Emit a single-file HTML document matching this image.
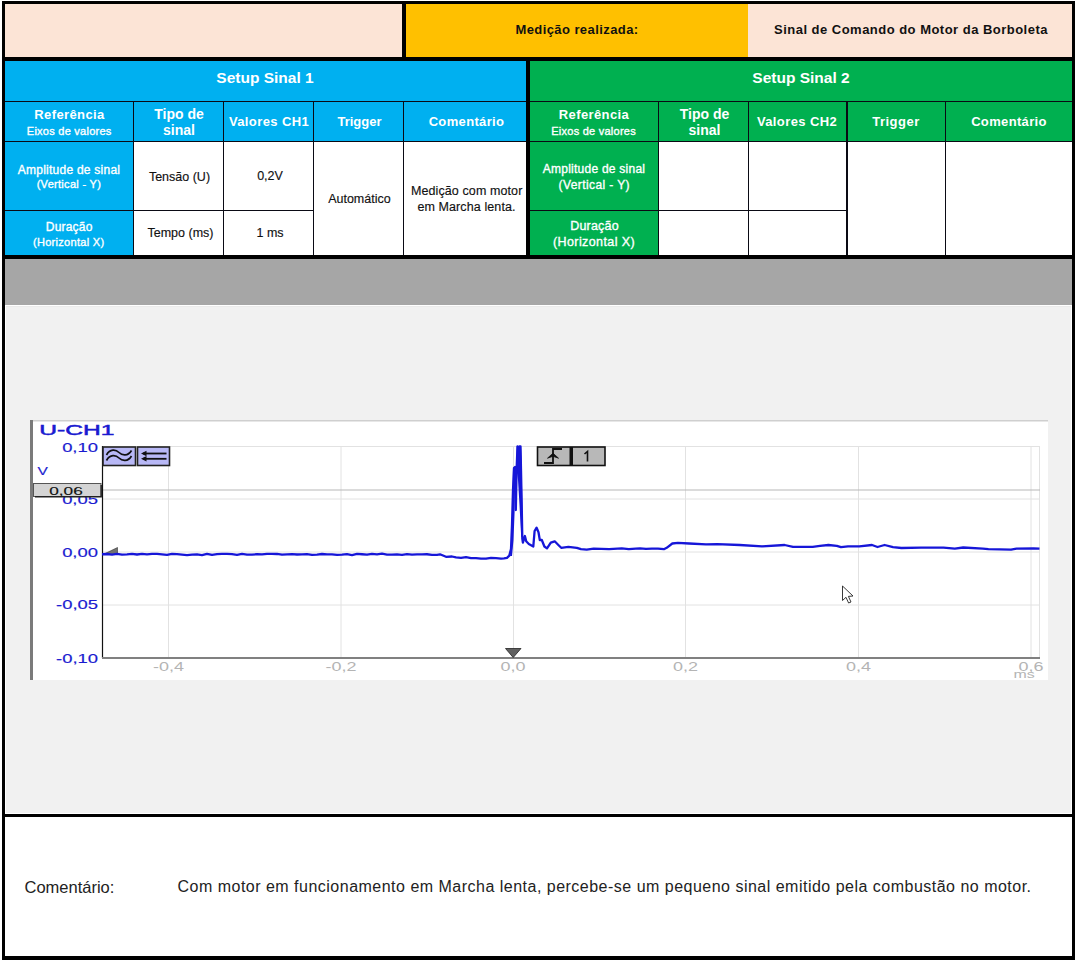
<!DOCTYPE html>
<html><head><meta charset="utf-8"><style>
html,body{margin:0;padding:0;background:#fff;}
body{width:1078px;height:962px;position:relative;overflow:hidden;font-family:"Liberation Sans",sans-serif;}
.r{position:absolute;}
.t{position:absolute;line-height:20px;height:20px;white-space:nowrap;}
</style></head><body>
<div class="r" style="left:2px;top:1px;width:1073px;height:959px;background:#000;"></div>
<div class="r" style="left:5px;top:4px;width:1067px;height:952px;background:#fff;"></div>
<div class="r" style="left:5px;top:4px;width:397px;height:53px;background:#FCE4D6;"></div>
<div class="r" style="left:406px;top:4px;width:342px;height:53px;background:#FFC000;"></div>
<div class="r" style="left:748px;top:4px;width:324px;height:53px;background:#FCE4D6;"></div>
<div class="r" style="left:5px;top:61px;width:521px;height:194px;background:#00B0F0;"></div>
<div class="r" style="left:530px;top:61px;width:542px;height:194px;background:#00B050;"></div>
<div class="r" style="left:134px;top:142px;width:392px;height:113px;background:#fff;"></div>
<div class="r" style="left:659px;top:142px;width:413px;height:113px;background:#fff;"></div>
<div class="r" style="left:5px;top:101px;width:521px;height:1px;background:#0a0a14;"></div>
<div class="r" style="left:529px;top:101px;width:543px;height:1px;background:#0a0a14;"></div>
<div class="r" style="left:5px;top:141px;width:521px;height:1px;background:#0a0a14;"></div>
<div class="r" style="left:529px;top:141px;width:543px;height:1px;background:#0a0a14;"></div>
<div class="r" style="left:5px;top:210px;width:308px;height:1px;background:#0a0a14;"></div>
<div class="r" style="left:529px;top:210px;width:317px;height:1px;background:#0a0a14;"></div>
<div class="r" style="left:133px;top:102px;width:1px;height:153px;background:#0a0a14;"></div>
<div class="r" style="left:223px;top:102px;width:1px;height:153px;background:#0a0a14;"></div>
<div class="r" style="left:313px;top:102px;width:1px;height:153px;background:#0a0a14;"></div>
<div class="r" style="left:403px;top:102px;width:1px;height:153px;background:#0a0a14;"></div>
<div class="r" style="left:658px;top:102px;width:1px;height:153px;background:#0a0a14;"></div>
<div class="r" style="left:748px;top:102px;width:1px;height:153px;background:#0a0a14;"></div>
<div class="r" style="left:945px;top:102px;width:1px;height:153px;background:#0a0a14;"></div>
<div class="r" style="left:846px;top:102px;width:2px;height:153px;background:#0a0a14;"></div>
<div class="r" style="left:5px;top:57px;width:1067px;height:4px;background:#000;"></div>
<div class="r" style="left:402px;top:4px;width:4px;height:53px;background:#000;"></div>
<div class="r" style="left:526px;top:61px;width:4px;height:198px;background:#000;"></div>
<div class="r" style="left:5px;top:255px;width:1067px;height:4px;background:#000;"></div>
<div class="r" style="left:5px;top:814px;width:1067px;height:3px;background:#000;"></div>
<div class="r" style="left:5px;top:259px;width:1067px;height:46px;background:#A6A6A6;"></div>
<div class="r" style="left:5px;top:305px;width:1067px;height:509px;background:#FFFFFF;"></div>
<div class="r" style="left:6px;top:306px;width:1065px;height:507px;background:#F1F1F1;"></div>
<div class="r" style="left:6px;top:306px;width:1065px;height:1px;background:#EAEAEA;"></div>
<div class="r" style="left:5px;top:813px;width:1067px;height:1px;background:#fff;"></div>
<div class="t" style="left:277.00px;top:19.70px;width:600px;text-align:center;font-size:13px;font-weight:bold;color:#111;letter-spacing:0.42px;">Medição realizada:</div>
<div class="t" style="left:611.00px;top:20.10px;width:600px;text-align:center;font-size:13px;font-weight:bold;color:#111;letter-spacing:0.48px;">Sinal de Comando do Motor da Borboleta</div>
<div class="t" style="left:-35.00px;top:68.43px;width:600px;text-align:center;font-size:15.5px;font-weight:bold;color:#fff;letter-spacing:0px;">Setup Sinal 1</div>
<div class="t" style="left:501.00px;top:68.43px;width:600px;text-align:center;font-size:15.5px;font-weight:bold;color:#fff;letter-spacing:0px;">Setup Sinal 2</div>
<div class="t" style="left:-230.50px;top:105.30px;width:600px;text-align:center;font-size:13px;font-weight:bold;color:#fff;letter-spacing:0.4px;">Referência</div>
<div class="t" style="left:-230.80px;top:121.19px;width:600px;text-align:center;font-size:11px;font-weight:normal;color:#fff;letter-spacing:0.25px;-webkit-text-stroke:0.35px #fff;">Eixos de valores</div>
<div class="t" style="left:-121.00px;top:103.55px;width:600px;text-align:center;font-size:14px;font-weight:bold;color:#fff;letter-spacing:0px;">Tipo de</div>
<div class="t" style="left:-121.00px;top:119.55px;width:600px;text-align:center;font-size:14px;font-weight:bold;color:#fff;letter-spacing:0px;">sinal</div>
<div class="t" style="left:-31.00px;top:112.30px;width:600px;text-align:center;font-size:13px;font-weight:bold;color:#fff;letter-spacing:0.39px;">Valores CH1</div>
<div class="t" style="left:59.50px;top:112.30px;width:600px;text-align:center;font-size:13px;font-weight:bold;color:#fff;letter-spacing:0px;">Trigger</div>
<div class="t" style="left:166.50px;top:112.30px;width:600px;text-align:center;font-size:13px;font-weight:bold;color:#fff;letter-spacing:0.35px;">Comentário</div>
<div class="t" style="left:294.00px;top:105.30px;width:600px;text-align:center;font-size:13px;font-weight:bold;color:#fff;letter-spacing:0.4px;">Referência</div>
<div class="t" style="left:293.60px;top:121.19px;width:600px;text-align:center;font-size:11px;font-weight:normal;color:#fff;letter-spacing:0.25px;-webkit-text-stroke:0.35px #fff;">Eixos de valores</div>
<div class="t" style="left:404.50px;top:103.55px;width:600px;text-align:center;font-size:14px;font-weight:bold;color:#fff;letter-spacing:0px;">Tipo de</div>
<div class="t" style="left:404.50px;top:119.55px;width:600px;text-align:center;font-size:14px;font-weight:bold;color:#fff;letter-spacing:0px;">sinal</div>
<div class="t" style="left:497.00px;top:112.30px;width:600px;text-align:center;font-size:13px;font-weight:bold;color:#fff;letter-spacing:0.39px;">Valores CH2</div>
<div class="t" style="left:596.00px;top:112.30px;width:600px;text-align:center;font-size:13px;font-weight:bold;color:#fff;letter-spacing:0.5px;">Trigger</div>
<div class="t" style="left:709.00px;top:112.30px;width:600px;text-align:center;font-size:13px;font-weight:bold;color:#fff;letter-spacing:0.35px;">Comentário</div>
<div class="t" style="left:-231.00px;top:159.84px;width:600px;text-align:center;font-size:12px;font-weight:normal;color:#fff;letter-spacing:0.25px;-webkit-text-stroke:0.35px #fff;">Amplitude de sinal</div>
<div class="t" style="left:-231.10px;top:173.79px;width:600px;text-align:center;font-size:11px;font-weight:normal;color:#fff;letter-spacing:0.3px;-webkit-text-stroke:0.35px #fff;">(Vertical - Y)</div>
<div class="t" style="left:-230.80px;top:217.04px;width:600px;text-align:center;font-size:12px;font-weight:normal;color:#fff;letter-spacing:0.2px;-webkit-text-stroke:0.35px #fff;">Duração</div>
<div class="t" style="left:-231.30px;top:232.19px;width:600px;text-align:center;font-size:11px;font-weight:normal;color:#fff;letter-spacing:0.3px;-webkit-text-stroke:0.35px #fff;">(Horizontal X)</div>
<div class="t" style="left:294.00px;top:159.04px;width:600px;text-align:center;font-size:12px;font-weight:normal;color:#fff;letter-spacing:0.25px;-webkit-text-stroke:0.35px #fff;">Amplitude de sinal</div>
<div class="t" style="left:294.30px;top:174.54px;width:600px;text-align:center;font-size:12px;font-weight:normal;color:#fff;letter-spacing:0.4px;-webkit-text-stroke:0.35px #fff;">(Vertical - Y)</div>
<div class="t" style="left:294.50px;top:215.87px;width:600px;text-align:center;font-size:12.5px;font-weight:normal;color:#fff;letter-spacing:0.2px;-webkit-text-stroke:0.35px #fff;">Duração</div>
<div class="t" style="left:294.00px;top:231.97px;width:600px;text-align:center;font-size:12.5px;font-weight:normal;color:#fff;letter-spacing:0.4px;-webkit-text-stroke:0.35px #fff;">(Horizontal X)</div>
<div class="t" style="left:-120.50px;top:166.77px;width:600px;text-align:center;font-size:12.5px;font-weight:normal;color:#111;letter-spacing:0px;-webkit-text-stroke:0.15px #111;">Tensão (U)</div>
<div class="t" style="left:-119.50px;top:223.17px;width:600px;text-align:center;font-size:12.5px;font-weight:normal;color:#111;letter-spacing:0px;-webkit-text-stroke:0.15px #111;">Tempo (ms)</div>
<div class="t" style="left:-30.00px;top:165.97px;width:600px;text-align:center;font-size:12.5px;font-weight:normal;color:#111;letter-spacing:0px;-webkit-text-stroke:0.15px #111;">0,2V</div>
<div class="t" style="left:-30.00px;top:222.97px;width:600px;text-align:center;font-size:12.5px;font-weight:normal;color:#111;letter-spacing:0px;-webkit-text-stroke:0.15px #111;">1 ms</div>
<div class="t" style="left:59.40px;top:189.17px;width:600px;text-align:center;font-size:12.5px;font-weight:normal;color:#111;letter-spacing:0px;-webkit-text-stroke:0.15px #111;">Automático</div>
<div class="t" style="left:166.70px;top:181.27px;width:600px;text-align:center;font-size:12.5px;font-weight:normal;color:#111;letter-spacing:0.1px;-webkit-text-stroke:0.15px #111;">Medição com motor</div>
<div class="t" style="left:166.50px;top:196.67px;width:600px;text-align:center;font-size:12.5px;font-weight:normal;color:#111;letter-spacing:0.1px;-webkit-text-stroke:0.15px #111;">em Marcha lenta.</div>
<div class="t" style="left:24.50px;top:877.28px;width:600px;text-align:left;font-size:16.5px;font-weight:normal;color:#222;letter-spacing:0px;">Comentário:</div>
<div class="t" style="left:177.50px;top:877.46px;width:900px;text-align:left;font-size:16px;font-weight:normal;color:#222;letter-spacing:0.49px;">Com motor em funcionamento em Marcha lenta, percebe-se um pequeno sinal emitido pela combustão no motor.</div>
<svg class="r" style="left:0;top:0" width="1078" height="962" viewBox="0 0 1078 962"><rect x="33" y="421" width="1015" height="259" fill="#fff"/><rect x="30" y="420" width="3" height="260" fill="#7a7a7a"/><rect x="33" y="420" width="1015" height="1.5" fill="#cfcfcf"/><line x1="102" y1="446.5" x2="1040" y2="446.5" stroke="#e2e2e2" stroke-width="1"/><line x1="102" y1="499" x2="1040" y2="499" stroke="#e2e2e2" stroke-width="1"/><line x1="102" y1="552" x2="1040" y2="552" stroke="#e2e2e2" stroke-width="1"/><line x1="102" y1="605" x2="1040" y2="605" stroke="#e2e2e2" stroke-width="1"/><line x1="168.5" y1="446" x2="168.5" y2="658" stroke="#e2e2e2" stroke-width="1"/><line x1="341" y1="446" x2="341" y2="658" stroke="#e2e2e2" stroke-width="1"/><line x1="513.5" y1="446" x2="513.5" y2="658" stroke="#e2e2e2" stroke-width="1"/><line x1="685.5" y1="446" x2="685.5" y2="658" stroke="#e2e2e2" stroke-width="1"/><line x1="858.5" y1="446" x2="858.5" y2="658" stroke="#e2e2e2" stroke-width="1"/><line x1="1031" y1="446" x2="1031" y2="658" stroke="#e2e2e2" stroke-width="1"/><line x1="1039.5" y1="446" x2="1039.5" y2="658" stroke="#e2e2e2" stroke-width="1"/><line x1="102" y1="490" x2="1040" y2="490" stroke="#b8b8b8" stroke-width="1.2"/><line x1="102.5" y1="446" x2="102.5" y2="658" stroke="#111" stroke-width="1.2"/><line x1="102" y1="658" x2="1040" y2="658" stroke="#808080" stroke-width="2"/><text x="0" y="0" transform="translate(39.3,435) scale(1.64,1)" font-size="15" fill="#1a1ad0" text-anchor="start" font-family="Liberation Sans" stroke="#1a1ad0" stroke-width="0.5">U-CH1</text><text x="0" y="0" transform="translate(98,451.5) scale(1.5,1)" font-size="12.3" fill="#1a1ad0" text-anchor="end" font-family="Liberation Sans" stroke="#1a1ad0" stroke-width="0.15">0,10</text><text x="0" y="0" transform="translate(98,504) scale(1.5,1)" font-size="12.3" fill="#1a1ad0" text-anchor="end" font-family="Liberation Sans" stroke="#1a1ad0" stroke-width="0.15">0,05</text><text x="0" y="0" transform="translate(98,556.8) scale(1.5,1)" font-size="12.3" fill="#1a1ad0" text-anchor="end" font-family="Liberation Sans" stroke="#1a1ad0" stroke-width="0.15">0,00</text><text x="0" y="0" transform="translate(98,609.3) scale(1.5,1)" font-size="12.3" fill="#1a1ad0" text-anchor="end" font-family="Liberation Sans" stroke="#1a1ad0" stroke-width="0.15">-0,05</text><text x="0" y="0" transform="translate(98,663) scale(1.5,1)" font-size="12.3" fill="#1a1ad0" text-anchor="end" font-family="Liberation Sans" stroke="#1a1ad0" stroke-width="0.15">-0,10</text><text x="0" y="0" transform="translate(37.5,475.3) scale(1.35,1)" font-size="11.5" fill="#1a1ad0" text-anchor="start" font-family="Liberation Sans" stroke="#1a1ad0" stroke-width="0.15">V</text><text x="0" y="0" transform="translate(168.5,670.8) scale(1.5,1)" font-size="12" fill="#b4b4b4" text-anchor="middle" font-family="Liberation Sans" >-0,4</text><text x="0" y="0" transform="translate(341,670.8) scale(1.5,1)" font-size="12" fill="#b4b4b4" text-anchor="middle" font-family="Liberation Sans" >-0,2</text><text x="0" y="0" transform="translate(513,670.8) scale(1.5,1)" font-size="12" fill="#b4b4b4" text-anchor="middle" font-family="Liberation Sans" >0,0</text><text x="0" y="0" transform="translate(685.5,670.8) scale(1.5,1)" font-size="12" fill="#b4b4b4" text-anchor="middle" font-family="Liberation Sans" >0,2</text><text x="0" y="0" transform="translate(858.5,670.8) scale(1.5,1)" font-size="12" fill="#b4b4b4" text-anchor="middle" font-family="Liberation Sans" >0,4</text><text x="0" y="0" transform="translate(1031,670.8) scale(1.5,1)" font-size="12" fill="#b4b4b4" text-anchor="middle" font-family="Liberation Sans" >0,6</text><text x="0" y="0" transform="translate(1024,678) scale(1.45,1)" font-size="11" fill="#b4b4b4" text-anchor="middle" font-family="Liberation Sans" >ms</text><rect x="33.5" y="483.5" width="67.5" height="13" fill="#d4d4d4" stroke="#555" stroke-width="1"/><path d="M35,496.8 H101.2 V485" fill="none" stroke="#222" stroke-width="1.4"/><text x="0" y="0" transform="translate(66,494.6) scale(1.5,1)" font-size="11.5" fill="#111" text-anchor="middle" font-family="Liberation Sans" stroke="#111" stroke-width="0.15">0,06</text><polygon points="103,554.5 117.5,547.5 117.5,554.5" fill="#707070" stroke="#333" stroke-width="0.6"/><polygon points="505.5,648.5 521,648.5 513.2,657.5" fill="#606060" stroke="#222" stroke-width="0.8"/><rect x="103" y="447" width="32.5" height="18.5" fill="#b8b8f6" stroke="#222" stroke-width="1.6"/><rect x="137.5" y="447" width="32" height="18.5" fill="#b8b8f6" stroke="#222" stroke-width="1.6"/><path d="M106.5,455 C110,448.5 116,449.5 119,452.5 C122,455.5 128,456.5 131.5,450.5" fill="none" stroke="#111" stroke-width="1.7"/><path d="M106.5,460.5 C110,454 116,455 119,458 C122,461 128,462 131.5,456" fill="none" stroke="#111" stroke-width="1.7"/><line x1="143" y1="453.5" x2="166.5" y2="453.5" stroke="#111" stroke-width="1.8"/><line x1="143" y1="458.8" x2="166.5" y2="458.8" stroke="#111" stroke-width="1.8"/><polygon points="141,453.5 146.5,450.8 146.5,456.2" fill="#111"/><polygon points="141,458.8 146.5,456.1 146.5,461.5" fill="#111"/><rect x="537.5" y="447" width="67.5" height="18.5" fill="#b8b8b8" stroke="#111" stroke-width="1.6"/><rect x="569.5" y="447" width="3.5" height="18.5" fill="#111"/><path d="M544,463 H553 V449 H562" fill="none" stroke="#111" stroke-width="1.8"/><polygon points="547.5,458.2 553,453.2 558.5,458.2 553,456.3" fill="#111" stroke="#111" stroke-width="0.8" stroke-linejoin="round"/><path d="M584.5,454 L587.5,451.5 V461.5" fill="none" stroke="#111" stroke-width="1.6"/><polygon fill="#1616d8" points="516.8,446 521,446 521.6,463 522.3,502 522.6,537 521.2,537 519.5,505 518,480 516.3,468"/><polygon fill="#1616d8" points="510,556 511.3,549 512,527 512.3,505 512.8,485 513,468 516,466.5 516,476 515.2,476 514.6,512 513.5,540 512,556"/><polyline fill="none" stroke="#1616d8" stroke-width="2.3" stroke-linejoin="round" points="102,554.25 107,554.01 112,554.71 117,553.89 122,554.54 127,554.3 132,553.86 137,554.49 142,553.83 147,554.38 152,553.87 157,553.89 162,554.36 167,554.92 172,553.93 177,554.07 182,554.63 187,555.08 192,554.55 197,554.3 202,555.11 207,553.8 212,554.94 217,554.14 222,553.93 227,553.89 232,554.15 237,554.86 242,553.97 247,554.53 252,554.61 257,554.23 262,554.47 267,553.79 272,553.78 277,553.98 282,554.65 287,554.29 292,554.13 297,554.5 302,554.32 307,554.1 312,554.79 317,554.65 322,554.01 327,554.47 332,554.4 337,554.89 342,554.68 347,554.06 352,555.02 357,553.81 362,554.23 367,554.7 372,553.85 377,554.32 382,553.69 387,554.57 392,554.7 397,554.43 402,554.85 407,554.06 412,554.59 417,554.45 422,554.42 427,554.25 432,554.78 437,554.92 440,554.3 446,556.8 452,556.5 456,557.46 461,557.83 466,557.09 471,558.09 476,558.12 481,558.71 486,558.58 491,557.93 496,558.17 501,558.67 504,558.3 507,557.8 509.3,555.6 511,549 512,525 513,490 514,468 515,467 515.8,510 516.6,470 517.5,446.5 518.5,458 519.5,446.5 520.5,446.5 521,470 521.8,510 522.3,538.7 522.9,542.6 524.9,536 526.2,541.3 528.8,544 533.3,546.5 534.6,531 536.6,527.7 538.5,532.2 539.8,540 541.8,540 544.4,546.5 547,548.4 550.8,542.6 554.7,541.3 558.6,545.2 561.2,547.8 568.4,546.9 576.8,547.8 581,549.2 586.7,549.7 593.7,548.6 609.1,549.2 621.8,548.3 628.8,549.2 635.8,548.6 640,548.32 646,548.86 652,548.67 658,548.72 663.9,549.2 666.7,547.8 672.3,543.5 677.9,542.9 689.2,543.5 706,544.4 717.2,544.1 739.7,545 762.2,546.3 784.6,545 793,546.9 812.7,546.9 820,545.9 828.4,545 836.8,545.8 841,547.2 848,546.3 859.3,546.3 872,545 877.5,547 884.6,545 893,547.2 901.4,548 921,547.7 943.5,547.7 954.8,548.6 963.2,547.5 982.8,548.6 988.4,549.1 1011,549.7 1016.5,548.6 1033.4,548.3 1039.5,548.6"/><path d="M842.5,586 V600.5 L846,597.3 L848.6,603 L851,602 L848.4,596.4 L853,596 Z" fill="#fff" stroke="#222" stroke-width="0.9"/></svg></body></html>
